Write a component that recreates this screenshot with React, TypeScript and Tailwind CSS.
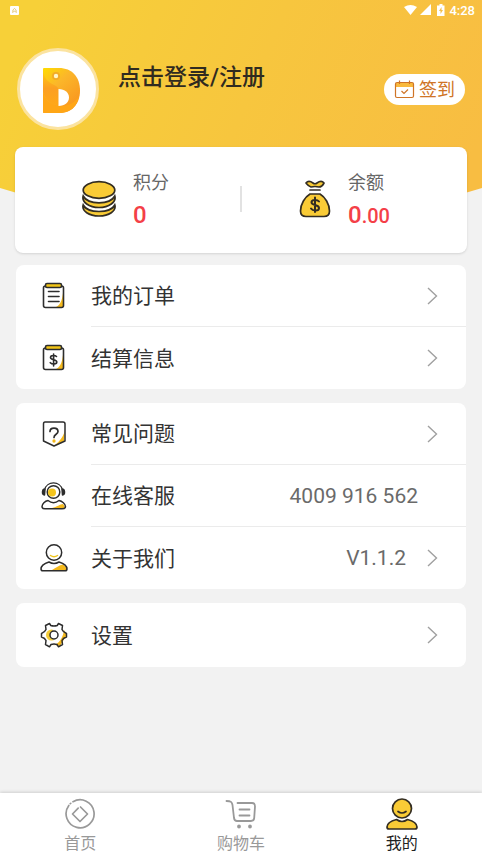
import React from "react";

const App = () => {
  return (
    <div className="relative isolate flex min-h-screen flex-col bg-[#f2f2f2] font-['Roboto','Noto_Sans_CJK_SC',sans-serif] text-[#333333]">
      <HeaderBackground />
      <StatusBar />

      <header className="flex h-[127px] items-center px-[17px] pt-[11px]">
        <div className="flex flex-1 items-start gap-[19px]">
          <Logo />
          <a href="#login" className="mt-[14px] text-[23px] leading-8 font-medium text-[#302b20]">
            点击登录/注册
          </a>
        </div>
        <button type="button" className="flex h-[31px] items-center gap-1 rounded-full bg-white pt-px pr-[10px] pl-[10px] text-lg leading-none text-[#cf7426]">
          <CalendarIcon />
          签到
        </button>
      </header>

      <main className="mb-6 flex flex-col gap-[14px] px-4">
        <section className="-mx-px -mb-[2px] flex h-[106px] items-center rounded-lg bg-white pb-[2px] shadow-sm">
          <Stat label="积分" icon={<CoinsIcon />}>
            0
          </Stat>
          <div className="h-[26px] w-[2px] shrink-0 bg-[#e2e2e2]" />
          <Stat label="余额" icon={<MoneyBagIcon />}>
            0<span className="text-xl leading-none">.00</span>
          </Stat>
        </section>

        <Card>
          <Row label="我的订单" icon={<OrderIcon />} divider arrow />
          <Row label="结算信息" icon={<BillIcon />} arrow />
        </Card>
        <Card>
          <Row label="常见问题" icon={<QuestionIcon />} divider arrow />
          <Row label="在线客服" icon={<ServiceIcon />} value="4009 916 562" divider />
          <Row label="关于我们" icon={<AboutIcon />} value="V1.1.2" arrow />
        </Card>
        <Card>
          <Row label="设置" icon={<GearIcon />} arrow />
        </Card>
      </main>

      <nav className="sticky bottom-0 mt-auto flex h-[63px] bg-white shadow-[0_-1px_3px_rgba(0,0,0,0.15)]">
        <Tab label="首页" icon={<HomeIcon />} />
        <Tab label="购物车" icon={<CartIcon />} />
        <Tab label="我的" icon={<MineIcon />} active />
      </nav>
    </div>
  );
};

const HeaderBackground = () => (
  <svg className="absolute inset-x-0 top-0 -z-10 h-[230px] w-full" viewBox="0 0 482 230" preserveAspectRatio="none" aria-hidden="true">
    <defs>
      <linearGradient id="header" x1="0" y1="0.4" x2="1" y2="0.6">
        <stop offset="0" stopColor="#f7d038" />
        <stop offset="0.5" stopColor="#f7c63e" />
        <stop offset="1" stopColor="#f8bd42" />
      </linearGradient>
    </defs>
    <path d="M0 0H482V188Q241 264 0 188Z" fill="url(#header)" />
  </svg>
);

const StatusBar = () => (
  <div className="flex h-5 items-center justify-between pr-[7px] pl-[10px] text-white">
    <svg width="9" height="9" viewBox="0 0 9 9" aria-hidden="true">
      <rect width="9" height="9" rx="1" fill="#fff" />
      <path d="M2.8 7V4.2L4.5 2.3L6.2 4.2V7M3 5.2H6" fill="none" stroke="#e3c878" strokeWidth="0.9" />
    </svg>
    <div className="flex items-center gap-1 text-[13px] leading-none font-medium">
      <svg width="41" height="12" viewBox="0 0 41 12" fill="#fff" aria-hidden="true">
        <path d="M0 3Q6.500 -1 13 3L6.500 11Z" />
        <path d="M27 0V11H16Z" />
        <path d="M35.500 0H38.500V1.500H40.500V12H33V1.500H35.500Z" />
        <path d="M37.500 3L35 7H36.500V10L39 6H37.500Z" fill="#f4bf4a" />
      </svg>
      <span>4:28</span>
    </div>
  </div>
);

const Logo = () => (
  <div className="size-[82px] rounded-full border-3 border-[#fbe3a0] bg-white">
    <svg className="size-full" viewBox="0 0 76 76" aria-hidden="true">
      <defs>
        <linearGradient id="logo" x1="0" y1="0" x2="0.7" y2="1">
          <stop offset="0" stopColor="#ffdc00" />
          <stop offset="0.4" stopColor="#fbb72a" />
          <stop offset="1" stopColor="#f9941e" />
        </linearGradient>
        <linearGradient id="logoFold" x1="0" y1="0" x2="0" y2="1">
          <stop offset="0" stopColor="#ffcb10" />
          <stop offset="0.5" stopColor="#fc9f22" />
          <stop offset="1" stopColor="#ffa817" />
        </linearGradient>
      </defs>
      <path d="M24 17H39C52 17 60 26 60 39.500C60 53 52 62 39 62H24Q23 62 23 61V18Q23 17 24 17Z" fill="url(#logo)" />
      <path d="M23 20C24 29 30 32 36 35C38 36 38.500 38 38.500 38V55C30 53 25 48 23 41Z" fill="url(#logoFold)" />
      <path d="M23 41C25 49 31 54 38 55C47 56 55 52 59 45C57 56 50 62 39 62H24Q23 62 23 61Z" fill="#ffa616" />
      <path d="M38.500 38C45 38 49 42 49 46.500C49 51 45 55 38.500 55Z" fill="#fff" />
      <circle cx="36" cy="25" r="4" fill="#f2ab26" />
      <circle cx="36" cy="25" r="2.200" fill="#fff5c8" />
    </svg>
  </div>
);

interface StatProps {
  label: string;
  icon: React.ReactNode;
  children: React.ReactNode;
}

const Stat: React.FC<StatProps> = ({ label, icon, children }) => (
  <div className="flex w-1/2 items-center justify-center gap-[17px] first:pr-1 last:pr-5">
    {icon}
    <div>
      <p className="text-lg leading-8 text-[#666666]">{label}</p>
      <p className="text-2xl leading-8 font-medium text-[#f43f48]">{children}</p>
    </div>
  </div>
);

const Card = ({ children }: { children: React.ReactNode }) => (
  <section className="overflow-hidden rounded-lg bg-white">{children}</section>
);

interface RowProps {
  label: string;
  icon: React.ReactNode;
  value?: string;
  divider?: boolean;
  arrow?: boolean;
}

const Row: React.FC<RowProps> = ({ label, icon, value, divider, arrow }) => (
  <a href="#" className="flex h-[62px] items-stretch pl-6 only:h-16">
    <span className="flex w-[51px] items-center">{icon}</span>
    <span className={`flex flex-1 items-center border-[#ebebeb] pr-7 ${divider ? "border-b" : ""}`}>
      <span className="flex-1 pt-[3px] text-[21px]">{label}</span>
      {value && <span className="mr-5 pt-[2px] text-[21px] text-[#6a6a6a]">{value}</span>}
      {arrow && (
        <svg width="12" height="18" viewBox="0 0 12 18" fill="none" stroke="#a0a0a0" strokeWidth="1.4" aria-hidden="true">
          <path d="M2 1L10.500 9L2 17" />
        </svg>
      )}
    </span>
  </a>
);

interface TabProps {
  label: string;
  icon: React.ReactNode;
  active?: boolean;
}

const Tab: React.FC<TabProps> = ({ label, icon, active }) => (
  <a href="#" className={`flex flex-1 flex-col items-center gap-[2px] pt-[5px] text-base leading-6 ${active ? "text-[#222222]" : "text-[#999999]"}`}>
    {icon}
    <span>{label}</span>
  </a>
);

// Icons
const CalendarIcon = () => (
  <svg width="21" height="19" viewBox="0 0 21 19" fill="none" stroke="#cf7426" strokeWidth="1.2" aria-hidden="true">
    <path d="M2 3H19V7H2Z" fill="#f9b93c" stroke="none" />
    <rect x="1.500" y="2.500" width="18" height="15" rx="1.500" />
    <path d="M5.500 0.500V4M15.500 0.500V4M7.500 11L10 13.500L14 9.500" />
  </svg>
);

const CoinsIcon = () => (
  <svg width="34" height="38" viewBox="0 0 34 38" fill="#f9cb36" stroke="#332d22" strokeWidth="1.7" aria-hidden="true">
    <path d="M1.200 25C-0.500 31 7 36 17 36S34.500 31 32.800 25C30 30 24 31.500 17 31.500S4 30 1.200 25Z" />
    <path d="M1.200 16C-0.500 22 7 27.500 17 27.500S34.500 22 32.800 16C30 21 24 22.800 17 22.800S4 21 1.200 16Z" />
    <ellipse cx="17" cy="10" rx="15.800" ry="8.300" />
  </svg>
);

const MoneyBagIcon = () => (
  <svg width="32" height="38" viewBox="0 0 32 38" fill="#f9cb36" stroke="#332d22" strokeWidth="1.7" strokeLinecap="round" strokeLinejoin="round" aria-hidden="true">
    <path d="M12 7C9 6 7.500 3.500 7 3C9 0.500 12 1.500 14 3Q16 4.500 18 3C20 1.500 23 0.500 25 3C24 5 22 7 20 7Q16 6 12 7Z" />
    <path d="M11 10H21" />
    <path d="M11 14H21C26 17 30.500 24 30.500 31Q30.500 36.500 25 36.500H7Q1.500 36.500 1.500 31C1.500 24 6 17 11 14Z" />
    <path d="M20 21.500C18.500 19.500 12.500 19 12.500 22.300C12.500 26 20 24 20 28C20 31.500 13.500 31 12 28.500M16 17.500V32" fill="none" strokeWidth="2" />
  </svg>
);

const OrderIcon = () => (
  <svg width="28" height="28" viewBox="0 0 28 28" fill="none" stroke="#2d2d2d" strokeWidth="1.600" strokeLinecap="round" aria-hidden="true">
    <path d="M23 11C22 19 20 24 14 26H23Z" fill="#f4b91c" stroke="none" />
    <rect x="3.500" y="4" width="20" height="21.500" rx="2" />
    <rect x="5.500" y="1.500" width="16" height="4" rx="1.500" fill="#f2c517" />
    <path d="M8.500 9.500H19M8.500 14.500H19M8.500 19.500H19" />
  </svg>
);

const BillIcon = () => (
  <svg width="28" height="28" viewBox="0 0 28 28" fill="none" stroke="#2d2d2d" strokeWidth="1.600" strokeLinecap="round" aria-hidden="true">
    <path d="M23 11C22 19 20 24 14 26H23Z" fill="#f4b91c" stroke="none" />
    <rect x="3.500" y="4" width="20" height="21.500" rx="2" />
    <rect x="5.500" y="1.500" width="16" height="4" rx="1.500" fill="#f2c517" />
    <path d="M16.500 12.500C15 11 10.500 11 10.500 13.500C10.500 16.500 16.800 15 16.800 18C16.800 20.500 12 20.500 10.300 18.700M13.600 10V22" />
  </svg>
);

const QuestionIcon = () => (
  <svg width="28" height="28" viewBox="0 0 28 28" fill="none" stroke="#2d2d2d" strokeWidth="1.500" strokeLinecap="round" strokeLinejoin="round" aria-hidden="true">
    <path d="M25 9C24 16 20 21 14 26L24 21Z" fill="#f4b91c" stroke="none" />
    <path d="M5 2H23Q25 2 25 4V21L14 26L3.500 21V4Q3.500 2 5 2Z" />
    <path d="M10 11.500C10 7 18 7 18 11.500C18 14.500 14 14 14 17.500" strokeWidth="1.700" />
    <circle cx="14" cy="21" r="0.900" fill="#f4b91c" stroke="#f4b91c" />
  </svg>
);

const ServiceIcon = () => (
  <svg width="28" height="28" viewBox="0 0 28 28" fill="none" stroke="#2d2d2d" strokeWidth="1.500" strokeLinecap="round" strokeLinejoin="round" aria-hidden="true">
    <path d="M4.500 8C6.500 -1.500 20.500 -1.500 22.500 8" strokeWidth="1.200" />
    <path d="M5 7C2 7 1.500 12.500 4.500 13ZM22 7C25 7 25.500 12.500 22.500 13Z" fill="#2d2d2d" />
    <circle cx="13.500" cy="10" r="6.300" fill="#fff" />
    <circle cx="12" cy="10.500" r="4" fill="#f5c51c" stroke="none" />
    <path d="M12 26C17 25 20 22 23 22L25 25Q24 26.500 21 26.500Z" fill="#f4b91c" stroke="none" />
    <path d="M8 18.500C5 19 2 22 2 24.500Q2 26.800 5 26.800H22Q25.500 26.800 25.500 24.500C25.500 22 22 19 19 18.500Q13.500 23 8 18.500Z" />
  </svg>
);

const AboutIcon = () => (
  <svg width="28" height="28" viewBox="0 0 28 28" fill="none" stroke="#2d2d2d" strokeWidth="1.500" strokeLinecap="round" strokeLinejoin="round" aria-hidden="true">
    <path d="M12 26C16 24 19 21 23 20.500L27 24V26.500H12Z" fill="#f4b91c" stroke="none" />
    <circle cx="14" cy="8.500" r="7.700" />
    <path d="M10.500 11.500Q14 14 17.500 11.500" stroke="#f0c51c" />
    <path d="M9 18Q1 20.500 1 25Q1 26.800 3 26.800H25Q27 26.800 27 25Q27 20.500 19 18Q14 20.800 9 18Z" />
  </svg>
);

const GearIcon = () => (
  <svg width="28" height="28" viewBox="0 0 28 28" fill="none" stroke="#2d2d2d" strokeWidth="1.500" strokeLinejoin="round" aria-hidden="true">
    <path d="M24 9L27 14L23 20L20 25L15 24L12 25C19 23 23 17 24 9Z" fill="#f4b91c" stroke="none" />
    <circle cx="11.500" cy="14" r="5.500" fill="#f5cd37" stroke="none" />
    <circle cx="15" cy="14" r="5" fill="#fff" stroke="none" />
    <path d="M10.800 4.500Q14 5.500 17.200 4.500L18.500 2.500L22.500 4.500L22 8.500Q23 11 26.500 12.500V16Q23 17 22 19.500L22.500 23.500L18.500 25.800L17 23.500Q14 22.500 11 23.500L9.500 25.800L5.500 23.500L6 19.500Q5 17 1.500 16V12.500Q5 11 6 8.500L5.500 4.500L9.500 2.500Z" />
    <circle cx="14" cy="14" r="4" />
  </svg>
);

const HomeIcon = () => (
  <svg width="32" height="32" viewBox="0 0 32 32" fill="none" stroke="#999999" strokeWidth="1.700" strokeLinecap="round" strokeLinejoin="round" aria-hidden="true">
    <path d="M9 3.700A14 14 0 1 1 4.800 7.500M6.300 5.700L6.700 5.300" />
    <path d="M14.200 10.200L8.500 16L16 23.500L23.500 16L16.500 9" />
  </svg>
);

const CartIcon = () => (
  <svg width="32" height="32" viewBox="0 0 32 32" fill="none" stroke="#999999" strokeWidth="1.800" strokeLinecap="round" strokeLinejoin="round" aria-hidden="true">
    <path d="M1.500 3C6 3 7 4 7.500 7L9 20Q9.500 23 12 23H26Q29 23 29.200 20L30 8.500Q30 5 27 5H12.500" />
    <path d="M14.500 11.500H24.500M14.500 17.500H24.500" />
    <circle cx="14" cy="28.500" r="1" fill="#999999" />
    <circle cx="25" cy="28.500" r="1" fill="#999999" />
  </svg>
);

const MineIcon = () => (
  <svg width="32" height="32" viewBox="0 0 32 32" fill="#f9cb36" stroke="#332d22" strokeWidth="1.700" strokeLinecap="round" strokeLinejoin="round" aria-hidden="true">
    <path d="M10.500 21.500Q1 24 1 29Q1 31 3 31H29Q31 31 31 29Q31 24 21.500 21.500Q16 25.500 10.500 21.500Z" />
    <circle cx="16" cy="10.500" r="9.500" />
    <path d="M12 13.500Q16 16.500 20 13.500" fill="none" />
  </svg>
);

export default App;
